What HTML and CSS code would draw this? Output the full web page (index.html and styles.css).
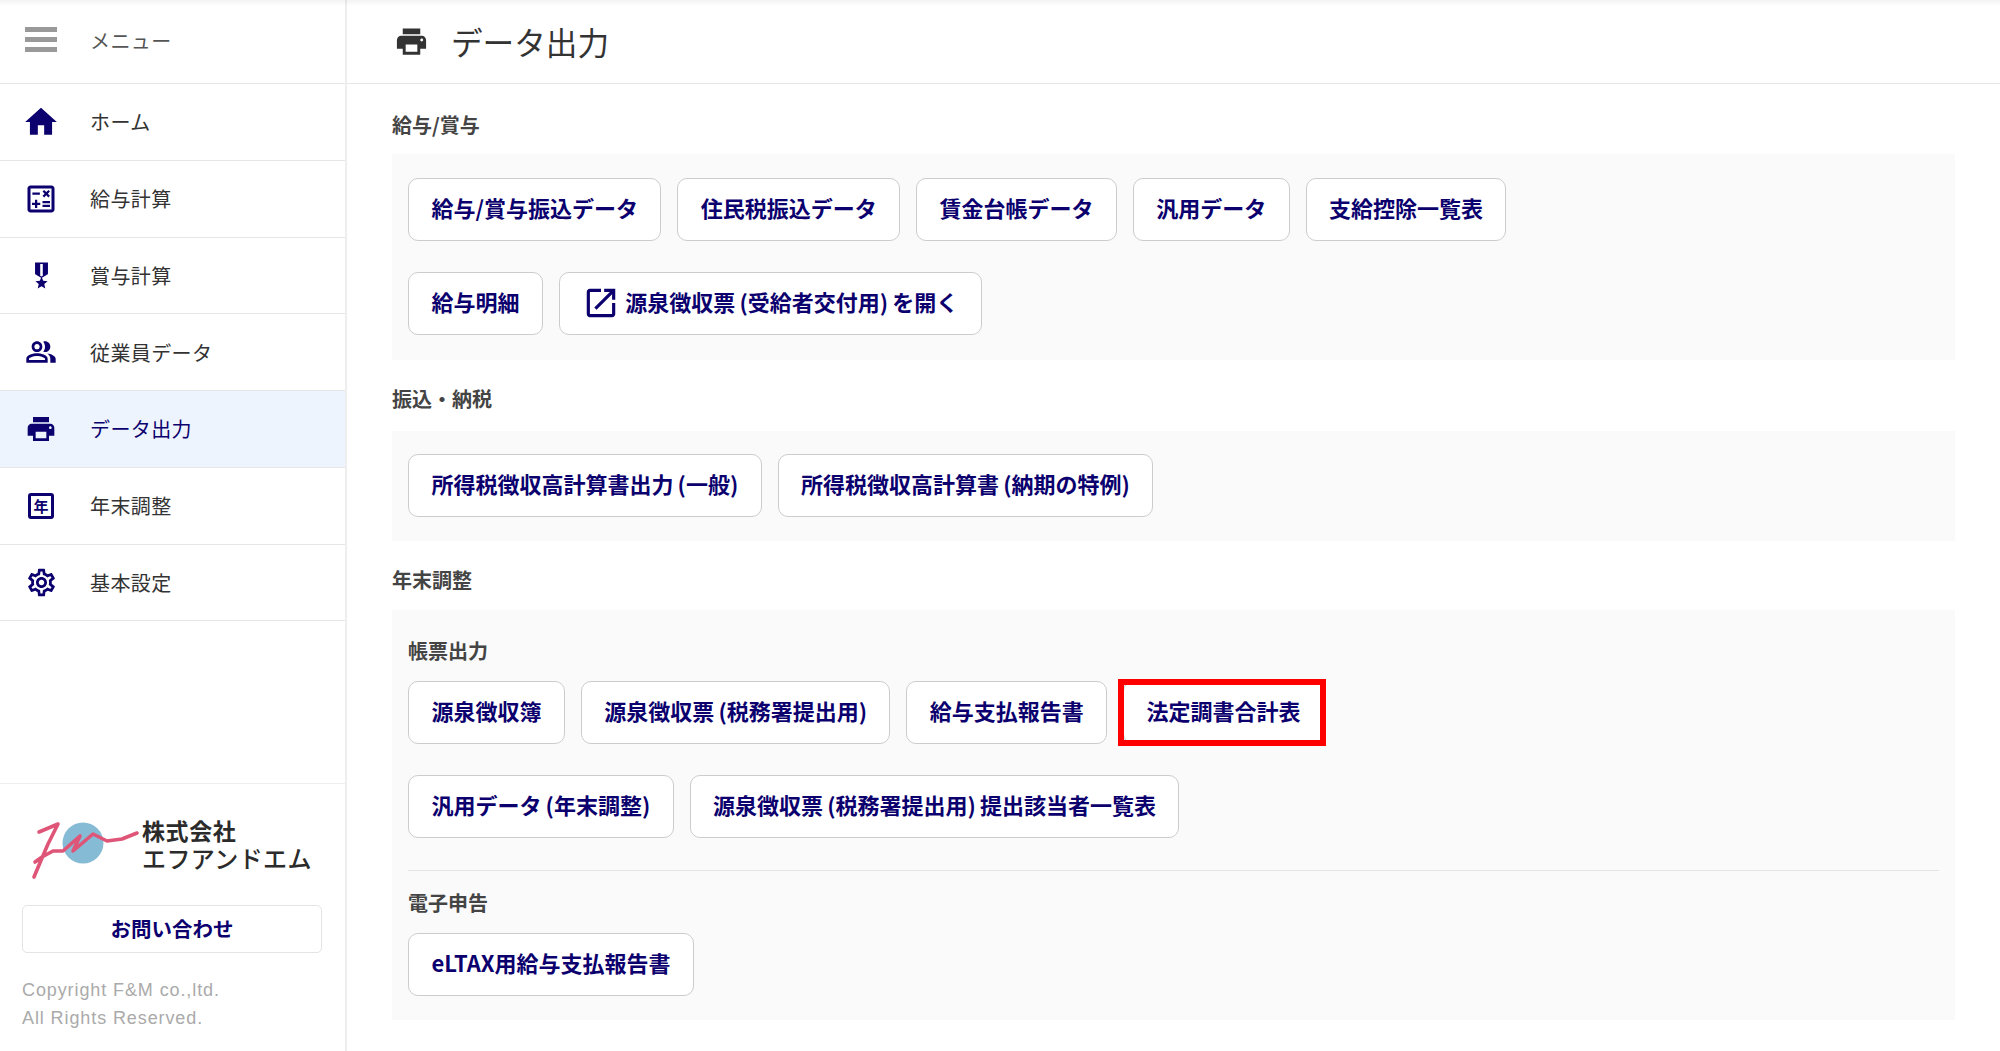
FILE: index.html
```html
<!DOCTYPE html>
<html lang="ja">
<head>
<meta charset="utf-8">
<title>データ出力</title>
<link rel="stylesheet" href="styles.css">
</head>
<body>
<div class="app">
  <aside class="sidebar">
    <div class="menu-head">
      <span class="nav-icon"><span class="burger"><i></i><i></i><i></i></span></span>
      <span class="menu-label">メニュー</span>
    </div>
    <nav class="nav">
      <a class="nav-item"><span class="nav-icon"><svg class="ic ic-38" viewBox="0 0 24 24"><path d="M10 20v-6h4v6h5v-8h3L12 3 2 12h3v8z"/></svg></span>ホーム</a>
      <a class="nav-item"><span class="nav-icon"><svg class="ic ic-36" viewBox="0 0 24 24"><path d="M19 3H5c-1.1 0-2 .9-2 2v14c0 1.1.9 2 2 2h14c1.1 0 2-.9 2-2V5c0-1.1-.9-2-2-2zm0 16H5V5h14v14z"/><path d="M6.25 7.72h5v1.5h-5zM13 15.75h5v1.5h-5zM13 13.25h5v1.5h-5zM8 18h1.5v-2h2v-1.5h-2v-2H8v2H6V16h2zM14.09 10.95l1.41-1.41 1.41 1.41 1.06-1.06-1.41-1.42 1.41-1.41L16.97 6 15.5 7.41 14.09 6l-1.06 1.06 1.41 1.41-1.41 1.42z"/></svg></span>給与計算</a>
      <a class="nav-item"><span class="nav-icon"><svg class="ic ic-31" viewBox="0 0 24 24"><path d="M17 10.43V2H7v8.43c0 .35.18.68.49.86l4.18 2.51-.99 2.34-3.41.29 2.59 2.24L9.07 22 12 20.23 14.93 22l-.78-3.33 2.59-2.24-3.41-.29-.99-2.34 4.18-2.51c.3-.18.48-.5.48-.86zm-4 1.8l-1 .6-1-.6V3h2v9.23z"/></svg></span>賞与計算</a>
      <a class="nav-item"><span class="nav-icon"><svg class="ic ic-32" viewBox="0 0 24 24"><path d="M16.67 13.13C18.04 14.06 19 15.32 19 17v3h4v-3c0-2.18-3.57-3.47-6.33-3.87z"/><path d="M15 12c2.21 0 4-1.79 4-4s-1.79-4-4-4c-.47 0-.91.1-1.33.24C14.5 5.27 15 6.58 15 8s-.5 2.73-1.33 3.76c.42.14.86.24 1.33.24z"/><path d="M9 12c2.21 0 4-1.79 4-4s-1.79-4-4-4-4 1.79-4 4 1.79 4 4 4zm0-6c1.1 0 2 .9 2 2s-.9 2-2 2-2-.9-2-2 .9-2 2-2z"/><path d="M9 13c-2.67 0-8 1.34-8 4v3h16v-3c0-2.66-5.33-4-8-4zm6 5H3v-.99C3.2 16.29 6.3 15 9 15s5.8 1.29 6 2v1z"/></svg></span>従業員データ</a>
      <a class="nav-item is-active"><span class="nav-icon"><svg class="ic ic-32" viewBox="0 0 24 24"><path d="M19 8H5c-1.66 0-3 1.34-3 3v6h4v4h12v-4h4v-6c0-1.66-1.34-3-3-3zm-3 11H8v-5h8v5zm3-7c-.55 0-1-.45-1-1s.45-1 1-1 1 .45 1 1-.45 1-1 1zm-1-9H6v4h12V3z"/></svg></span>データ出力</a>
      <a class="nav-item"><span class="nav-icon"><span class="year-box">年</span></span>年末調整</a>
      <a class="nav-item"><span class="nav-icon"><svg class="ic ic-33" viewBox="0 0 24 24"><path d="M19.43 12.98c.04-.32.07-.64.07-.98 0-.34-.03-.66-.07-.98l2.11-1.65c.19-.15.24-.42.12-.64l-2-3.46c-.09-.16-.26-.25-.44-.25-.06 0-.12.01-.17.03l-2.49 1c-.52-.4-1.08-.73-1.69-.98l-.38-2.65C14.46 2.18 14.25 2 14 2h-4c-.25 0-.46.18-.49.42l-.38 2.65c-.61.25-1.17.59-1.69.98l-2.49-1c-.06-.02-.12-.03-.18-.03-.17 0-.34.09-.43.25l-2 3.46c-.13.22-.07.49.12.64l2.11 1.65c-.04.32-.07.65-.07.98 0 .33.03.66.07.98l-2.11 1.65c-.19.15-.24.42-.12.64l2 3.46c.09.16.26.25.44.25.06 0 .12-.01.17-.03l2.49-1c.52.4 1.08.73 1.69.98l.38 2.65c.03.24.24.42.49.42h4c.25 0 .46-.18.49-.42l.38-2.65c.61-.25 1.17-.59 1.69-.98l2.49 1c.06.02.12.03.18.03.17 0 .34-.09.43-.25l2-3.46c.12-.22.07-.49-.12-.64l-2.11-1.65zm-1.98-1.71c.04.31.05.52.05.73 0 .21-.02.43-.05.73l-.14 1.13.89.7 1.08.84-.7 1.21-1.27-.51-1.04-.42-.9.68c-.43.32-.84.56-1.25.73l-1.06.43-.16 1.13-.2 1.35h-1.4l-.19-1.35-.16-1.13-1.06-.43c-.43-.18-.83-.41-1.23-.71l-.91-.7-1.06.43-1.27.51-.7-1.21 1.08-.84.89-.7-.14-1.13c-.03-.31-.05-.54-.05-.74s.02-.43.05-.73l.14-1.13-.89-.7-1.08-.84.7-1.21 1.27.51 1.04.42.9-.68c.43-.32.84-.56 1.25-.73l1.06-.43.16-1.13.2-1.35h1.39l.19 1.35.16 1.13 1.06.43c.43.18.83.41 1.23.71l.91.7 1.06-.43 1.27-.51.7 1.21-1.07.85-.89.7.14 1.13zM12 8c-2.21 0-4 1.79-4 4s1.79 4 4 4 4-1.79 4-4-1.79-4-4-4zm0 6c-1.1 0-2-.9-2-2s.9-2 2-2 2 .9 2 2-.9 2-2 2z"/></svg></span>基本設定</a>
    </nav>
    <div class="side-foot">
      <div class="logo">
        <svg class="logo-mark" viewBox="0 0 110 70">
          <circle class="logo-ball" cx="53" cy="27" r="20.5"/>
          <path class="logo-swoosh" d="M9 16 L28 8 L18 28 L12 42 L4 61 M5 46 L12 41 L23 35 L33 35 L50 20 L43 35 L63 18 L77 25 L92 23 L107 17"/>
        </svg>
        <div class="logo-text">
          <span class="logo-top">株式会社</span>
          <span class="logo-bottom">エフアンドエム</span>
        </div>
      </div>
      <a class="contact">お問い合わせ</a>
      <p class="copy">Copyright F&amp;M co.,ltd.<br>All Rights Reserved.</p>
    </div>
  </aside>

  <main class="main">
    <header class="page-head">
      <svg class="ic ic-34 head-icon" viewBox="0 0 24 24"><path d="M19 8H5c-1.66 0-3 1.34-3 3v6h4v4h12v-4h4v-6c0-1.66-1.34-3-3-3zm-3 11H8v-5h8v5zm3-7c-.55 0-1-.45-1-1s.45-1 1-1 1 .45 1 1-.45 1-1 1zm-1-9H6v4h12V3z"/></svg>
      <h1 class="page-title">データ出力</h1>
    </header>
    <div class="content">
      <section class="group group-1">
        <h2 class="group-title">給与/賞与</h2>
        <div class="panel">
          <div class="row">
            <a class="btn">給与/賞与振込データ</a>
            <a class="btn">住民税振込データ</a>
            <a class="btn">賃金台帳データ</a>
            <a class="btn">汎用データ</a>
            <a class="btn">支給控除一覧表</a>
          </div>
          <div class="row">
            <a class="btn">給与明細</a>
            <a class="btn"><svg class="ic ic-38 btn-icon" viewBox="0 0 24 24"><path d="M19 19H5V5h7V3H5c-1.11 0-2 .9-2 2v14c0 1.1.89 2 2 2h14c1.1 0 2-.9 2-2v-7h-2v7zM14 3v2h3.59l-9.83 9.83 1.41 1.41L19 6.41V10h2V3h-7z"/></svg>源泉徴収票 (受給者交付用) を開く</a>
          </div>
        </div>
      </section>
      <section class="group group-2">
        <h2 class="group-title">振込・納税</h2>
        <div class="panel">
          <div class="row">
            <a class="btn">所得税徴収高計算書出力 (一般)</a>
            <a class="btn">所得税徴収高計算書 (納期の特例)</a>
          </div>
        </div>
      </section>
      <section class="group group-3">
        <h2 class="group-title">年末調整</h2>
        <div class="panel panel-split">
          <h3 class="sub-title">帳票出力</h3>
          <div class="row">
            <a class="btn">源泉徴収簿</a>
            <a class="btn">源泉徴収票 (税務署提出用)</a>
            <a class="btn">給与支払報告書</a>
            <a class="btn is-marked">法定調書合計表</a>
          </div>
          <div class="row">
            <a class="btn">汎用データ (年末調整)</a>
            <a class="btn">源泉徴収票 (税務署提出用) 提出該当者一覧表</a>
          </div>
          <hr class="rule">
          <h3 class="sub-title">電子申告</h3>
          <div class="row">
            <a class="btn">eLTAX用給与支払報告書</a>
          </div>
        </div>
      </section>
    </div>
  </main>
</div>
</body>
</html>
```

FILE: styles.css
```css
* { box-sizing: border-box; }
html, body { margin: 0; height: 100%; background: #fff; }
body {
  font-family: "Noto Sans CJK JP", "Noto Sans", sans-serif;
  color: #333;
  overflow: hidden;
}
body::before {
  content: "";
  position: absolute;
  top: 0; left: 0; right: 0;
  height: 6px;
  background: linear-gradient(rgba(0, 0, 0, 0.05), rgba(0, 0, 0, 0));
}
.app { display: flex; height: 1051px; }
.ic { fill: currentColor; display: block; flex: none; }
.ic-31 { width: 31px; height: 31px; }
.ic-32 { width: 32px; height: 32px; }
.ic-33 { width: 33px; height: 33px; }
.ic-34 { width: 35px; height: 35px; }
.ic-36 { width: 36px; height: 36px; }
.ic-38 { width: 38px; height: 38px; }

/* sidebar */
.sidebar {
  width: 347px;
  flex: none;
  display: flex;
  flex-direction: column;
  border-right: 2px solid #eee;
}
.menu-head {
  height: 84px;
  display: flex;
  align-items: center;
  padding: 0 0 4px 21px;
  border-bottom: 1px solid #e6e6e6;
  font-size: 20px;
  letter-spacing: 0.4px;
  color: #555;
  gap: 29px;
}
.menu-label { margin-top: 2px; }
.nav-icon { width: 40px; display: flex; justify-content: center; align-items: center; flex: none; }
.burger { display: flex; flex-direction: column; gap: 4.5px; width: 32px; }
.burger i { display: block; height: 5.5px; background: #999; }
.nav-item {
  height: 76.75px;
  display: flex;
  align-items: center;
  padding-left: 21px;
  gap: 29px;
  border-bottom: 1px solid #e6e6e6;
  font-size: 20px;
  letter-spacing: 0.4px;
  color: #333;
}
.nav-item .nav-icon { color: #0b006e; }
.nav-item.is-active { background: #edf4fe; color: #0b006e; }
.year-box {
  width: 26px; height: 26px;
  border: 3px solid #0b006e;
  border-radius: 3px;
  font-size: 15px;
  font-weight: 700;
  line-height: 20px;
  text-align: center;
  letter-spacing: 0;
}
.side-foot {
  margin-top: auto;
  height: 268px;
  border-top: 1px solid #eee;
  padding: 32px 23px 0 22px;
}
.logo { display: flex; align-items: flex-start; gap: 2px; margin-left: 8px; height: 89px; }
.logo-mark { width: 110px; height: 70px; flex: none; }
.logo-ball { fill: #86bbd5; }
.logo-swoosh { fill: none; stroke: #df5578; stroke-width: 3.6; stroke-linejoin: round; stroke-linecap: round; }
.logo-text { display: flex; flex-direction: column; color: #2b2b2b; }
.logo-top { font-size: 23px; line-height: 29px; font-weight: 700; letter-spacing: 0.6px; }
.logo-bottom { font-size: 24px; line-height: 26px; font-weight: 500; letter-spacing: 0.4px; white-space: nowrap; }
.contact {
  display: block;
  height: 48px;
  line-height: 45px;
  border: 1px solid #e4e4e4;
  border-radius: 5px;
  text-align: center;
  font-size: 20.5px;
  font-weight: 700;
  color: #0b006e;
}
.copy {
  margin: 23px 0 0;
  font-family: "Liberation Sans", Arial, sans-serif;
  font-size: 18px;
  line-height: 28px;
  letter-spacing: 0.9px;
  color: #aaa;
}

/* main */
.main { flex: 1; min-width: 0; display: flex; flex-direction: column; }
.page-head {
  height: 84px;
  flex: none;
  display: flex;
  align-items: center;
  padding-left: 47px;
  gap: 22px;
  border-bottom: 1px solid #e6e6e6;
  color: #333;
}
.page-title { margin: 0; font-size: 31.6px; font-weight: 400; line-height: 1; }
.content { padding: 0 45px; }
.group-title {
  margin: 0;
  font-size: 20px;
  font-weight: 700;
  line-height: 30px;
  color: #444;
}
.group-1 { padding-top: 26px; }
.group-2 { padding-top: 24px; }
.group-3 { padding-top: 24px; }
.panel { background: #fafafa; margin-top: 14px; padding: 24px 16px 25px; }
.group-2 .panel { margin-top: 17px; padding: 23px 16px 24px; }
.group-3 .panel { margin-top: 15px; }
.group-3 .panel-split { padding: 26px 16px 24px; }
.row { display: flex; gap: 16px; }
.row + .row { margin-top: 31px; }
.btn {
  display: flex;
  align-items: center;
  height: 63px;
  padding: 0 22.4px 5px;
  background: #fff;
  border: 1px solid #ccc;
  border-radius: 10px;
  font-size: 22px;
  font-weight: 700;
  word-spacing: -0.8px;
  color: #0b006e;
  white-space: nowrap;
  position: relative;
}
.btn-icon { margin: 3px 5px 0 0; }
.is-marked::after {
  content: "";
  position: absolute;
  top: -3px; bottom: -3px; left: -6px; right: -3px;
  border: 6px solid #f00;
}
.sub-title {
  margin: 0 0 15px;
  font-size: 20px;
  font-weight: 700;
  line-height: 30px;
  color: #444;
}
.rule { border: 0; border-top: 1px solid #e4e4e4; margin: 32px 0 17px; }
```
